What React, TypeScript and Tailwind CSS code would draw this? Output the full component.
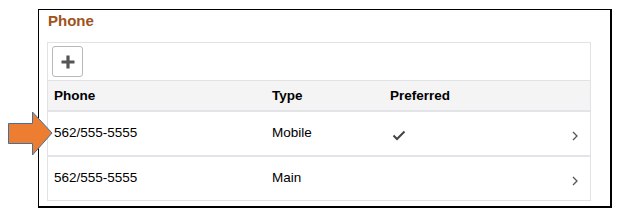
import React from "react";

function Chevron() {
  return (
    <svg width="8" height="12" viewBox="0 0 8 12" className="block">
      <path d="M2 2 L6 6 L2 10" fill="none" stroke="#555" strokeWidth="1.3" />
    </svg>
  );
}

function Check() {
  return (
    <svg width="14" height="11" viewBox="0 0 14 11" className="block">
      <path d="M1.5 5.5 L5 9 L12.5 1.5" fill="none" stroke="#444" strokeWidth="2" />
    </svg>
  );
}

export default function App() {
  const rows = [
    { phone: "562/555-5555", type: "Mobile", pref: true, h: "h-[45px]" },
    { phone: "562/555-5555", type: "Main", pref: false, h: "h-[43px]" },
  ];
  return (
    <div
      className="relative w-[624px] h-[217px] bg-white text-black"
      style={{ fontFamily: '"Liberation Sans", Arial, sans-serif' }}
    >
      <div className="absolute left-[38px] top-[9px] w-[574px] h-[199px] border border-black border-r-2 border-b-2 bg-white">
        <div className="pl-[9px] pt-[2px] h-[32px] text-[15px] font-bold text-[#a0521b] leading-[18px]">
          Phone
        </div>
        <div className="ml-[8px] w-[544px] border border-[#e0e2e6]">
          <div className="h-[38px] flex items-center pl-[4px] border-b border-[#e0e2e6]">
            <div className="w-[31px] h-[31px] border border-[#b8b8b8] rounded-[3px] bg-white flex items-center justify-center">
              <svg width="16" height="16" viewBox="0 0 16 16">
                <path d="M8 1.5 V14.5 M1.5 8 H14.5" stroke="#555" strokeWidth="3.2" />
              </svg>
            </div>
          </div>
          <div className="h-[31px] bg-[#f4f4f4] grid grid-cols-[218px_118px_1fr] items-center pl-[6px] text-[13.5px] font-bold border-b-2 border-[#e2e4e8]">
            <div className="mt-[2px]">Phone</div>
            <div className="mt-[2px]">Type</div>
            <div className="mt-[2px]">Preferred</div>
          </div>
          {rows.map((r, i) => (
            <div
              key={i}
              className={`${r.h} grid grid-cols-[218px_118px_1fr_auto] items-center pl-[6px] pr-[11px] text-[13.5px] ${i === 0 ? "border-b-2 border-[#e2e4e8]" : ""}`}
            >
              <div className="-mt-[1px]">{r.phone}</div>
              <div className="-mt-[1px]">{r.type}</div>
              <div className="pl-[2px] mt-[3px]">{r.pref ? <Check /> : null}</div>
              <div className="mt-[5px]">
                <Chevron />
              </div>
            </div>
          ))}
        </div>
      </div>
      <svg
        className="absolute left-0 top-[105px]"
        width="60"
        height="60"
        viewBox="0 0 60 60"
      >
        <path
          d="M8.5 18.5 H32.5 V7 L52 28 L32.5 50 V38.5 H8.5 Z"
          fill="#ed7d31"
          stroke="#41719c"
          strokeWidth="1"
        />
      </svg>
    </div>
  );
}
